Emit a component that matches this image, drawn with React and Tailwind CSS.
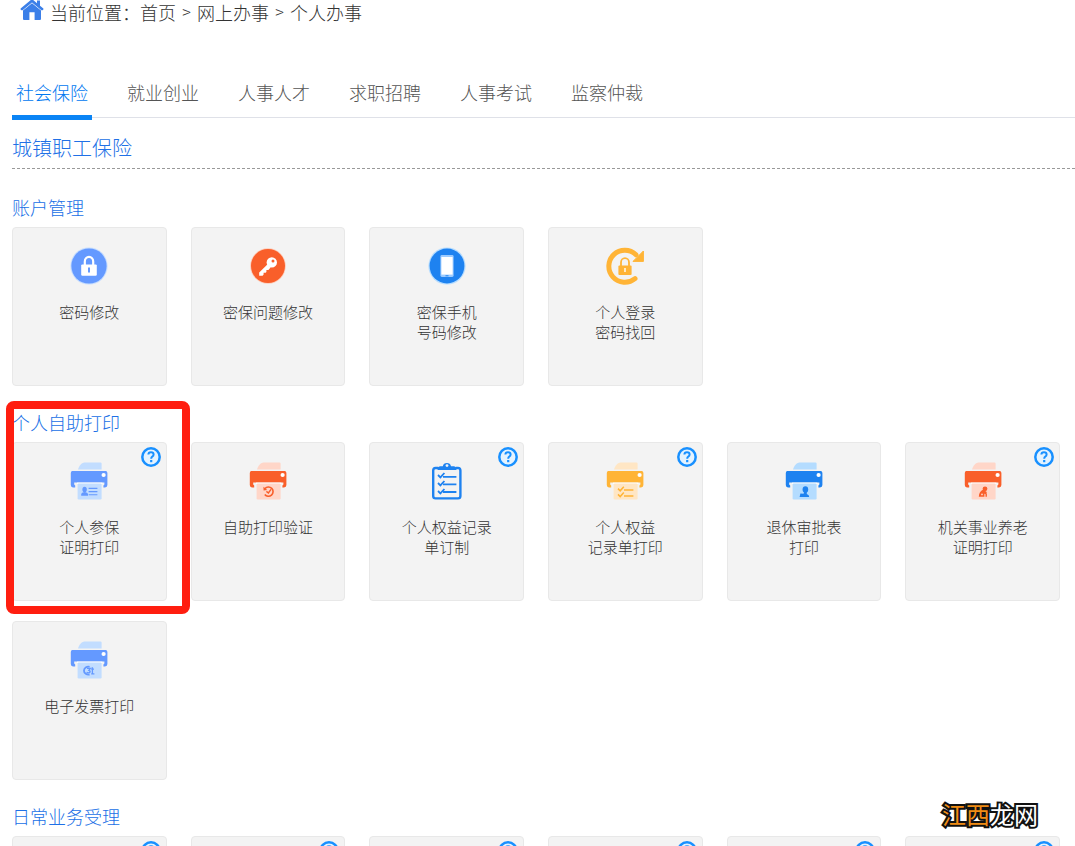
import clsx from "clsx"

const tabs = ["社会保险", "就业创业", "人事人才", "求职招聘", "人事考试", "监察仲裁"]

const crumbs = ["首页", "网上办事", "个人办事"]

function HomeIcon() {
  return (
    <svg width="24" height="22" viewBox="0 0 24 22" fill="#3b7fe8" aria-hidden="true">
      <path d="M12 0 L0.6 9.6 Q0.4 11.8 2.6 11.2 L12 3.4 L21.4 11.2 Q23.6 11.8 23.4 9.6 L20 6.8 V1.4 H17 V4.2 Z" />
      <path d="M12 4.2 L3 11.6 V20 Q3 21 4 21 H9.4 V13.2 H14.6 V21 H20 Q21 21 21 20 V11.6 Z" />
    </svg>
  )
}

function LockIcon() {
  return (
    <svg width="38" height="38" viewBox="0 0 38 38" aria-hidden="true">
      <circle cx="19" cy="19" r="18.6" fill="#c4dcff" />
      <circle cx="19" cy="19" r="17.6" fill="#6499ff" />
      <path d="M14.8 18 V14.4 a4.2 4.6 0 0 1 8.4 0 V18" fill="none" stroke="#fff" strokeWidth="2.2" />
      <rect x="11.2" y="17.4" width="15.6" height="11.4" rx="1.2" fill="#fff" />
      <path d="M18 20.5 h2 v5 h-2z" fill="#6499ff" />
    </svg>
  )
}

function KeyIcon() {
  return (
    <svg width="38" height="38" viewBox="0 0 38 38" aria-hidden="true">
      <circle cx="19" cy="19" r="17.8" fill="#ffc9b5" />
      <circle cx="19" cy="19" r="17" fill="#f95f2a" />
      <path d="M18.6 17.2 L10.2 25.4 V28.8 H13.6 L14.6 27.6 V25.8 H16.6 L17.4 25 V23 H19.4 L21.6 20.4 Z" fill="#fff" />
      <circle cx="22.8" cy="15.4" r="5.2" fill="#fff" />
      <circle cx="24" cy="14" r="1.5" fill="#f95f2a" />
    </svg>
  )
}

function PhoneIcon() {
  return (
    <svg width="38" height="38" viewBox="0 0 38 38" aria-hidden="true">
      <circle cx="19" cy="19" r="18.6" fill="#b5dcff" />
      <circle cx="19" cy="19" r="17.4" fill="#1e82f0" />
      <rect x="12.4" y="8" width="13.2" height="22" rx="1.4" fill="#9ccbff" />
      <rect x="13.4" y="10" width="11.2" height="17.6" fill="#fff" />
      <path d="M17.5 28.8 h3" stroke="#1e82f0" />
    </svg>
  )
}

function RetrieveIcon() {
  return (
    <svg width="38" height="38" viewBox="0 0 38 38" aria-hidden="true">
      <path d="M29 31.6 A16 16 0 1 1 30 7.8" fill="none" stroke="#ffb436" strokeWidth="5" strokeLinecap="round" />
      <path d="M37.4 4 V14.4 H27 L31 10.4 Z" fill="#ffb436" stroke="#ffb436" strokeLinejoin="round" />
      <path d="M15 19 V15.4 a4 4.2 0 0 1 8 0 V19" fill="none" stroke="#ffb436" strokeWidth="1.8" />
      <rect x="12.4" y="18.4" width="13.2" height="9.6" rx="1" fill="#ffb436" />
      <path d="M19 21 v4" stroke="#fff" strokeWidth="1.4" />
    </svg>
  )
}

function ClipboardIcon() {
  return (
    <svg width="38" height="38" viewBox="0 0 38 38" fill="none" stroke="#1e82f0" aria-hidden="true">
      <path d="M10 6 H7.6 Q5.2 6 5.2 8.6 V34 Q5.2 36.4 7.6 36.4 H30 Q32.4 36.4 32.4 34 V8.6 Q32.4 6 30 6 H28" strokeWidth="2.4" />
      <path d="M9.6 8 V6 Q9.6 4.6 12 4.2 H14.8 A4.2 4.2 0 0 1 23 4.2 H26 Q28.4 4.6 28.4 6 V8 Z" fill="#1e82f0" stroke="none" />
      <circle cx="19" cy="3.6" r="1.4" fill="#f3f3f3" stroke="none" />
      <path d="M10 13 l2.4 2.4 l4 -4.4 M10 21 l2.4 2.4 l4 -4.4 M10 29 l2.4 2.4 l4 -4.4" strokeWidth="1.8" />
      <path d="M15 14.8 H28.4 M15 22.4 H28.4 M15 30 H28.4" strokeWidth="1.8" />
    </svg>
  )
}

function Printer({ dark, light, children }) {
  return (
    <svg width="38" height="38" viewBox="0 0 38 38" aria-hidden="true">
      <path d="M8 7.6 C9.2 3 11.6 0.4 15.6 0.4 H30.4 Q31.6 0.4 31.6 1.6 V7.6 Z" fill={light} />
      <path d="M2.4 9 H35.6 Q37.4 9 37.4 11 V23 Q37.4 25.4 35 25.4 H33.4 V23.6 L34.4 22.4 V20.4 H4.2 V22.4 L5.2 23.6 V25.4 H3 Q0.8 25.4 0.8 23 V11 Q0.8 9 2.4 9 Z" fill={dark} />
      <circle cx="33.6" cy="13" r="2.1" fill="#fff" />
      <path d="M7 20.6 H32.4 V22 H7 Z" fill="#fff" />
      <rect x="7.6" y="21.4" width="24" height="16" rx="1.2" fill={light} />
      {children}
    </svg>
  )
}

const icons = {
  lock: <LockIcon />,
  key: <KeyIcon />,
  phone: <PhoneIcon />,
  retrieve: <RetrieveIcon />,
  clipboard: <ClipboardIcon />,
  printCard: (
    <Printer dark="#6499ff" light="#c2ddff">
      <ellipse cx="14.6" cy="27.6" rx="2.2" ry="2.8" fill="#6499ff" />
      <path d="M11.2 33.8 V32 Q11.4 30.6 14.6 30 Q17.8 30.6 18 32 V33.8 Z" fill="#6499ff" />
      <path d="M18.6 26.4 H27.4 M18.6 29.6 H27.4 M18.6 32.8 H27.4" stroke="#6499ff" strokeWidth="1.1" />
    </Printer>
  ),
  printVerify: (
    <Printer dark="#f95f2a" light="#ffd6c8">
      <path d="M16 26.6 A4.6 4.6 0 1 1 15.8 32.4" fill="none" stroke="#f95f2a" strokeWidth="1.6" />
      <path d="M14.4 24.8 L14.6 28.6 L18.2 28 Z" fill="#f95f2a" />
      <path d="M17.4 29.4 L19.4 31 L22 27.4" fill="none" stroke="#f95f2a" strokeWidth="1.4" />
    </Printer>
  ),
  printList: (
    <Printer dark="#ffb436" light="#ffe6c4">
      <path d="M12 26.6 l2.2 2.2 l3.6 -4 M12 32.4 l2.2 2.2 l3.6 -4 M18 28 H27.4 M18 34 H27.4" fill="none" stroke="#ffb436" strokeWidth="1.5" />
    </Printer>
  ),
  printRetire: (
    <Printer dark="#1e82f0" light="#b4dcff">
      <ellipse cx="20.4" cy="27.4" rx="2.8" ry="3.2" fill="#1e82f0" />
      <path d="M14.6 35 L15.4 31.4 L18.6 31.8 L19.2 29.4 H21.8 V32 Q24.4 33 24.2 35 Z" fill="#1e82f0" />
    </Printer>
  ),
  printElder: (
    <Printer dark="#f95f2a" light="#ffd6c8">
      <circle cx="21" cy="26.8" r="2.4" fill="#f95f2a" />
      <path d="M19.2 27.6 Q15 29.6 14.8 34.8 H20.4 V31.8 L22.2 32.2 L22.8 30 L20.4 28.6 Z" fill="#f95f2a" />
      <path d="M22.2 31.4 V34.8" stroke="#f95f2a" strokeWidth="1.4" />
      <circle cx="18" cy="32.4" r="0.9" fill="#ffd6c8" />
    </Printer>
  ),
  printInvoice: (
    <Printer dark="#6499ff" light="#c2ddff">
      <path d="M19.6 25.8 A4.6 4 0 1 0 19.6 33.6" fill="none" stroke="#6499ff" strokeWidth="1.8" />
      <path d="M17 27.4 H20.4 L18.8 29.4 Q20.8 29.8 19.8 31.4 Q18.4 32.4 16.6 31.4 M22.4 26.2 V32.8 M21.2 28.2 H24 M21.2 32.8 H24.4" fill="none" stroke="#6499ff" strokeWidth="1.3" />
    </Printer>
  ),
}

const accountItems = [
  { icon: "lock", lines: ["密码修改"] },
  { icon: "key", lines: ["密保问题修改"] },
  { icon: "phone", lines: ["密保手机", "号码修改"] },
  { icon: "retrieve", lines: ["个人登录", "密码找回"] },
]

const printItems = [
  { icon: "printCard", lines: ["个人参保", "证明打印"], help: true },
  { icon: "printVerify", lines: ["自助打印验证"] },
  { icon: "clipboard", lines: ["个人权益记录", "单订制"], help: true },
  { icon: "printList", lines: ["个人权益", "记录单打印"], help: true },
  { icon: "printRetire", lines: ["退休审批表", "打印"] },
  { icon: "printElder", lines: ["机关事业养老", "证明打印"], help: true },
  { icon: "printInvoice", lines: ["电子发票打印"] },
]

const dailyItems = Array.from({ length: 6 }, () => ({ lines: [], help: true }))

function HelpIcon() {
  return (
    <svg width="20" height="20" viewBox="0 0 20 20" fill="none" stroke="#1890ff" aria-hidden="true">
      <circle cx="10" cy="10" r="8.7" fill="#e4f3ff" strokeWidth="2.5" />
      <path d="M7.4 7.6 Q7.4 5.2 10 5.2 Q12.6 5.2 12.6 7.4 Q12.6 8.8 11.2 9.6 Q10.2 10.2 10.2 11.8" strokeWidth="2" />
      <path d="M10.2 13 V15.2" strokeWidth="2.2" />
    </svg>
  )
}

function Card({ item }) {
  return (
    <div className="relative h-[159px] rounded border border-[#e8e8e8] bg-[#f3f3f3]">
      <a href="#" className="flex h-full flex-col items-center pt-[19px] text-[15px] leading-5 text-[#333]">
        {icons[item.icon]}
        <span className="mt-[17px] flex flex-col items-center">
          {item.lines.map((line) => (
            <span key={line}>{line}</span>
          ))}
        </span>
      </a>
      {item.help && (
        <button type="button" aria-label="帮助" className="absolute top-1 right-[5px] size-5">
          <HelpIcon />
        </button>
      )}
    </div>
  )
}

function Section({ title, items, marked }) {
  return (
    <section className="relative mb-5">
      <h3 className="flex h-9 items-center pb-1 text-[18px] text-[#2070e6]">{title}</h3>
      <div className="grid grid-cols-6 gap-x-6 gap-y-5 pr-[15px]">
        {items.map((item, i) => (
          <Card key={i} item={item} />
        ))}
      </div>

      {/* red frame round the first card */}
      {marked && (
        <div className="pointer-events-none absolute -top-[5px] -left-1.5 h-[213px] w-[184px] rounded-lg border-8 border-[#ff1e10]" />
      )}
    </section>
  )
}

export default function App() {
  return (
    <div className="relative h-screen overflow-hidden bg-white pl-3 font-['Noto_Sans_CJK_SC',sans-serif] font-light">
      <nav className="flex h-6 items-center pl-2 text-[18px] text-[#333]">
        <span className="mb-1">
          <HomeIcon />
        </span>
        <span className="ml-1.5">当前位置：</span>
        {crumbs.map((name, i) => (
          <span key={name} className="flex">
            {i > 0 && <span className="w-[21px] text-center text-[16px]">&gt;</span>}
            <a href="#">{name}</a>
          </span>
        ))}
      </nav>

      <nav className="mt-12 flex h-[46px] gap-[31px] border-b border-[#dfe1e8]">
        {tabs.map((name, i) => (
          <a
            key={name}
            href="#"
            className={clsx(
              "-mb-[3px] flex items-center border-b-[5px] px-1 pb-0.5 text-[18px]",
              i === 0 ? "border-[#0a84f5] text-[#0078f0]" : "border-transparent text-[#555]"
            )}
          >
            {name}
          </a>
        ))}
      </nav>

      <h2 className="mb-[22px] flex h-[51px] items-center border-b border-dashed border-[#999] pt-2.5 text-[20px] text-[#2070e6]">
        城镇职工保险
      </h2>

      <Section title="账户管理" items={accountItems} />
      <Section title="个人自助打印" items={printItems} marked />
      <Section title="日常业务受理" items={dailyItems} />

      <div className="absolute right-[37px] bottom-3.5 text-[24px] leading-9 font-normal text-white [-webkit-text-stroke:4px_#111] [paint-order:stroke]">
        <span className="text-[#f08c14]">江西</span>龙网
      </div>
    </div>
  )
}
